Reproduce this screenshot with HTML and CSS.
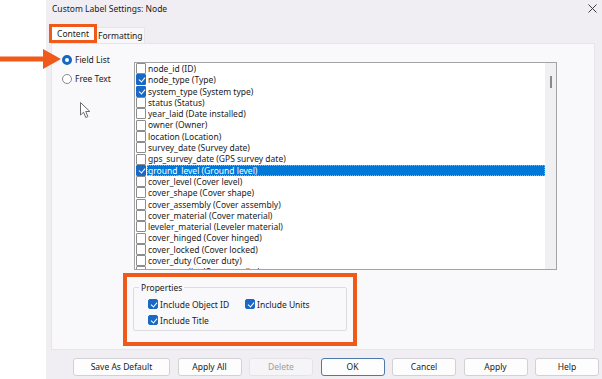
FILE: index.html
```html
<!DOCTYPE html>
<html>
<head>
<meta charset="utf-8">
<title>Custom Label Settings: Node</title>
<link rel="stylesheet" href="styles.css">
</head>
<body>
<div class="screen">
  <div class="gutter"></div>
  <div class="dialog">
    <div class="titlebar">
      <span class="title">Custom Label Settings: Node</span>
      <svg class="close" width="9" height="9" viewBox="0 0 9 9"><path d="M0.5 0.5 L8.5 8.5 M8.5 0.5 L0.5 8.5" stroke="#3a3a3a" stroke-width="1" fill="none"/></svg>
    </div>
    <div class="tabs">
      <div class="tab active">Content</div>
      <div class="tab">Formatting</div>
    </div>
    <div class="panel">
      <div class="top">
        <div class="modes">
          <div class="radio"><span class="rb on"></span>Field List</div>
          <div class="radio"><span class="rb"></span>Free Text</div>
        </div>
        <div class="listbox">
          <div class="rows">
            <div class="row"><span class="cb"></span><span class="lbl">node_id (ID)</span></div>
            <div class="row"><span class="cb on"></span><span class="lbl">node_type (Type)</span></div>
            <div class="row"><span class="cb on"></span><span class="lbl">system_type (System type)</span></div>
            <div class="row"><span class="cb"></span><span class="lbl">status (Status)</span></div>
            <div class="row"><span class="cb"></span><span class="lbl">year_laid (Date installed)</span></div>
            <div class="row"><span class="cb"></span><span class="lbl">owner (Owner)</span></div>
            <div class="row"><span class="cb"></span><span class="lbl">location (Location)</span></div>
            <div class="row"><span class="cb"></span><span class="lbl">survey_date (Survey date)</span></div>
            <div class="row"><span class="cb"></span><span class="lbl">gps_survey_date (GPS survey date)</span></div>
            <div class="row sel"><span class="cb on"></span><span class="lbl">ground_level (Ground level)</span></div>
            <div class="row"><span class="cb"></span><span class="lbl">cover_level (Cover level)</span></div>
            <div class="row"><span class="cb"></span><span class="lbl">cover_shape (Cover shape)</span></div>
            <div class="row"><span class="cb"></span><span class="lbl">cover_assembly (Cover assembly)</span></div>
            <div class="row"><span class="cb"></span><span class="lbl">cover_material (Cover material)</span></div>
            <div class="row"><span class="cb"></span><span class="lbl">leveler_material (Leveler material)</span></div>
            <div class="row"><span class="cb"></span><span class="lbl">cover_hinged (Cover hinged)</span></div>
            <div class="row"><span class="cb"></span><span class="lbl">cover_locked (Cover locked)</span></div>
            <div class="row"><span class="cb"></span><span class="lbl">cover_duty (Cover duty)</span></div>
            <div class="row"><span class="cb"></span><span class="lbl">cover_quality (Cover quality)</span></div>
          </div>
          <div class="scroll"><div class="thumb"></div></div>
        </div>
      </div>
      <div class="callout">
        <fieldset class="props">
          <legend>Properties</legend>
          <div class="opts">
            <div class="opt"><span class="ck"></span>Include Object ID</div>
            <div class="opt"><span class="ck"></span>Include Units</div>
            <div class="opt"><span class="ck"></span>Include Title</div>
          </div>
        </fieldset>
      </div>
    </div>
    <div class="buttons">
      <button class="btn wide">Save As Default</button>
      <button class="btn">Apply All</button>
      <button class="btn disabled">Delete</button>
      <button class="btn default">OK</button>
      <button class="btn">Cancel</button>
      <button class="btn">Apply</button>
      <button class="btn">Help</button>
    </div>
  </div>
  <svg class="arrow" width="62" height="22" viewBox="0 0 62 22"><rect x="0" y="8.5" width="44" height="5" fill="#ef5a1a"/><polygon points="43,1 61,11 43,21" fill="#ef5a1a"/></svg>
  <svg class="cursor" width="12" height="17" viewBox="0 0 12 17"><path d="M0.5 0.5 L0.5 13 L3.5 10.2 L5.8 15.5 L7.9 14.6 L5.7 9.5 L9.8 9.5 Z" fill="#fff" stroke="#6a6a6a" stroke-width="1" stroke-linejoin="round"/></svg>
</div>
</body>
</html>
```
FILE: styles.css
```css
* { box-sizing: border-box; }
body {
  margin: 0;
  background: #ffffff;
  font-family: "Noto Sans", "Open Sans", sans-serif;
  font-size: 8.5px;
  color: #1b1b1b;
}
.screen {
  position: relative;
  display: flex;
  width: 602px;
  height: 379px;
  overflow: hidden;
}
.gutter { width: 46px; flex: none; }
.dialog {
  width: 556px;
  height: 379px;
  background: #f0eef2;
  display: flex;
  flex-direction: column;
}
.titlebar {
  height: 24px;
  display: flex;
  justify-content: space-between;
  align-items: flex-start;
  padding: 3px 5px 0 6px;
}
.title { font-size: 8.5px; line-height: 12px; }
.close { margin-top: 1px; }
.tabs {
  height: 19px;
  display: flex;
  align-items: flex-end;
  padding-left: 3px;
}
.tab {
  height: 16px;
  width: 48px;
  padding-left: 1px;
  line-height: 15px;
  background: #f7f6f9;
  border: 1px solid #e6e4e9;
  border-bottom: none;
  border-left: none;
}
.tab.active {
  height: 19px;
  width: 48px;
  padding: 0;
  border: 3px solid #ef5a1a;
  background: #ffffff;
  text-align: center;
  line-height: 13px;
}
.panel {
  margin: 0 7px 0 5px;
  height: 307px;
  background: #f9f8fb;
  border: 1px solid #e7e5ea;
  padding: 10px 0 0 10px;
}
.top { display: flex; }
.modes {
  width: 72px;
  flex: none;
  display: flex;
  flex-direction: column;
  gap: 8px;
}
.radio {
  display: flex;
  align-items: center;
  gap: 3px;
  height: 11px;
  line-height: 11px;
}
.rb {
  width: 10px;
  height: 10px;
  border-radius: 50%;
  border: 1px solid #8a8a8a;
  background: #fff;
  flex: none;
}
.rb.on { border: 3px solid #1467c2; }
.listbox {
  margin-top: 8px;
  width: 423px;
  height: 208px;
  border: 1px solid #a3a3a3;
  background: #ffffff;
  display: flex;
  overflow: hidden;
}
.rows { flex: 1; min-width: 0; }
.row {
  display: flex;
  align-items: center;
  height: 11.3px;
}
.cb {
  width: 10px;
  height: 11px;
  margin: 0 1px 0 1px;
  border: 1px solid #8c8c8c;
  border-radius: 1px;
  background: #fff;
  flex: none;
  position: relative;
}
.cb.on, .ck {
  background: #1a68c6;
  border-color: #1a68c6;
}
.cb.on::after, .ck::after {
  content: "";
  position: absolute;
  left: 3px;
  top: 1px;
  width: 3px;
  height: 5px;
  border-right: 1px solid #fff;
  border-bottom: 1px solid #fff;
  transform: rotate(40deg);
}
.lbl {
  flex: 1;
  height: 100%;
  line-height: 11.3px;
  padding-left: 1px;
  white-space: nowrap;
}
.row.sel .lbl {
  background: #0078d7;
  color: #ffffff;
  outline: 1px dotted #7fb6ea;
  outline-offset: -1px;
}
.scroll {
  width: 11px;
  flex: none;
  background: #f0eff2;
  padding: 13px 0 0 5px;
}
.thumb { width: 2px; height: 12px; background: #8a8a8a; }
.callout {
  margin: 3px 0 0 61px;
  width: 234px;
  height: 73px;
  border: 4px solid #ef5a1a;
  padding: 4px 6px 0 6px;
}
.props {
  margin: 0;
  padding: 0;
  height: 50px;
  border: 1px solid #dedce3;
  border-radius: 2px;
}
.props legend {
  margin-left: 5px;
  padding: 0 2px;
  line-height: 13px;
}
.opts {
  display: grid;
  grid-template-columns: 97px auto;
  grid-auto-rows: 16px;
  padding: 2px 0 0 14px;
}
.opt {
  display: flex;
  align-items: center;
  gap: 2px;
  white-space: nowrap;
}
.ck {
  width: 10px;
  height: 10px;
  border-radius: 2px;
  border: 1px solid #1a68c6;
  position: relative;
  flex: none;
}
.buttons {
  display: flex;
  gap: 7.5px;
  padding: 8px 0 0 27px;
}
.btn {
  height: 18px;
  width: 64px;
  padding: 0;
  margin: 0;
  border: 1px solid #d2d1d5;
  border-radius: 3px;
  background: #fdfdfd;
  font-family: inherit;
  font-size: 8.5px;
  color: #1b1b1b;
  line-height: 16px;
}
.btn.wide { width: 97px; }
.btn.disabled { background: #f5f4f7; border-color: #e4e3e7; color: #a0a0a0; }
.btn.default { border-color: #4b79ab; }
.arrow { position: absolute; left: 0; top: 48px; }
.cursor { position: absolute; left: 80px; top: 102px; }
```
